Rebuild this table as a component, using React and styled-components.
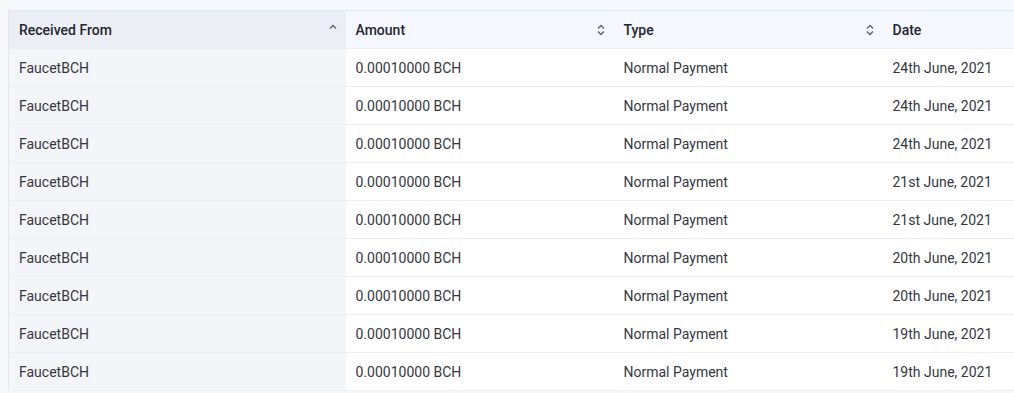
import React from 'react';
import styled, { createGlobalStyle } from 'styled-components';

const GlobalStyle = createGlobalStyle`
  html, body {
    margin: 0;
    padding: 0;
    background: #f6f8fc;
    font-family: Roboto, "Noto Sans", Arial, sans-serif;
  }
`;

const Page = styled.div`
  padding: 10px 0 0 8px;
  overflow: hidden;
  height: 393px;
  box-sizing: border-box;
`;

const Table = styled.table`
  border-collapse: collapse;
  table-layout: fixed;
  width: 1060px;
  border-top: 1px solid #e3e6ee;
  border-left: 1px solid #e3e6ee;
  font-size: 14px;
`;

const HeadCell = styled.th`
  height: 37px;
  padding: 0 8px 0 10px;
  text-align: left;
  font-weight: 500;
  color: #23262f;
  background: ${(p) => (p.$sorted ? '#eceef5' : '#f5f8fe')};
  border-bottom: 1px solid #eceef3;
`;

const HeadInner = styled.div`
  display: flex;
  align-items: center;
  justify-content: space-between;
`;

const Cell = styled.td`
  height: 37px;
  padding: 0 10px;
  color: #34373f;
  background: ${(p) => (p.$sorted ? '#f4f5f9' : '#ffffff')};
  border-bottom: 1px solid #eceef3;
  white-space: nowrap;
`;

const SortIcon = ({ dir }) => (
  <svg width="10" height="14" viewBox="0 0 10 14" fill="none" stroke="#5c6070" strokeWidth="1.3">
    <path d="M2 5.5 L5 2.5 L8 5.5" />
    {dir === 'both' && <path d="M2 8.5 L5 11.5 L8 8.5" />}
  </svg>
);

const columns = [
  { title: 'Received From', width: 337, sort: 'asc', sorted: true },
  { title: 'Amount', width: 268, sort: 'both' },
  { title: 'Type', width: 269, sort: 'both' },
  { title: 'Date', width: 187 },
];

const dates = [
  '24th June, 2021',
  '24th June, 2021',
  '24th June, 2021',
  '21st June, 2021',
  '21st June, 2021',
  '20th June, 2021',
  '20th June, 2021',
  '19th June, 2021',
  '19th June, 2021',
];

const rows = dates.map((date) => ['FaucetBCH', '0.00010000 BCH', 'Normal Payment', date]);

export default function App() {
  return (
    <>
      <GlobalStyle />
      <Page>
        <Table>
          <colgroup>
            {columns.map((c) => (
              <col key={c.title} style={{ width: c.width }} />
            ))}
          </colgroup>
          <thead>
            <tr>
              {columns.map((c) => (
                <HeadCell key={c.title} $sorted={c.sorted}>
                  <HeadInner>
                    <span>{c.title}</span>
                    {c.sort && <SortIcon dir={c.sort} />}
                  </HeadInner>
                </HeadCell>
              ))}
            </tr>
          </thead>
          <tbody>
            {rows.map((r, i) => (
              <tr key={i}>
                {r.map((v, j) => (
                  <Cell key={j} $sorted={j === 0}>
                    {v}
                  </Cell>
                ))}
              </tr>
            ))}
          </tbody>
        </Table>
      </Page>
    </>
  );
}
